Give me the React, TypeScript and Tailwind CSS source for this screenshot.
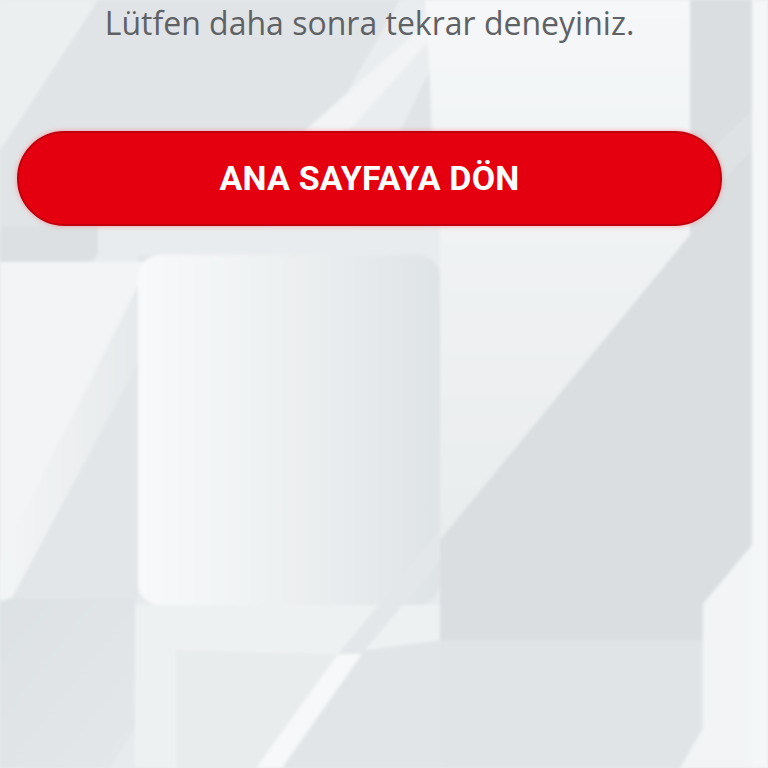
import React from 'react';

// soft geometric backdrop, drawn once behind the content
function Backdrop() {
  return (
    <svg
      className="absolute inset-0 h-full w-full"
      viewBox="0 0 768 768"
      preserveAspectRatio="none"
      xmlns="http://www.w3.org/2000/svg"
    >
      <defs>
        <filter id="soft" x="-5%" y="-5%" width="110%" height="110%">
          <feGaussianBlur stdDeviation="1.6" />
        </filter>
        <linearGradient id="bigCard" x1="0" y1="0" x2="1" y2="0">
          <stop offset="0" stopColor="#f8f9fa" />
          <stop offset="0.45" stopColor="#eef1f2" />
          <stop offset="1" stopColor="#dfe3e5" />
        </linearGradient>
        <linearGradient id="lightTop" x1="0" y1="0" x2="0" y2="1">
          <stop offset="0" stopColor="#f5f7f8" />
          <stop offset="1" stopColor="#e9eced" />
        </linearGradient>
        <linearGradient id="leftCol" x1="0" y1="0" x2="1" y2="0">
          <stop offset="0" stopColor="#f3f5f6" />
          <stop offset="1" stopColor="#e6e9eb" />
        </linearGradient>
        <linearGradient id="darkBox" x1="0" y1="0" x2="1" y2="1">
          <stop offset="0" stopColor="#dde1e3" />
          <stop offset="1" stopColor="#e4e7e9" />
        </linearGradient>
      </defs>
      <g filter="url(#soft)">
        {/* top left area */}
        <rect x="0" y="0" width="430" height="262" fill="#e1e4e6" />
        <polygon points="0,0 98,0 20,120 0,150" fill="#eceff0" />
        <polygon points="250,262 335,262 430,70 430,0 400,0" fill="#eaedef" />
        <polygon points="300,135 345,135 430,40 430,20" fill="#f2f4f5" />

        {/* light column top centre-right */}
        <polygon points="425,0 690,0 690,235 440,540 440,250" fill="url(#lightTop)" />

        {/* dark right mass */}
        <polygon points="690,0 752,0 752,545 703,604 703,768 440,768 440,540 690,235" fill="#dadee0" />
        <polygon points="690,170 752,110 752,150 690,215" fill="#dfe2e4" />
        <rect x="440" y="640" width="263" height="128" fill="#e0e4e6" />

        {/* right strip */}
        <rect x="752" y="0" width="16" height="768" fill="#f4f6f7" />
        <polygon points="752,545 752,768 680,768 703,728 703,604" fill="#f2f4f5" />

        {/* under the button, left */}
        <rect x="0" y="226" width="440" height="40" fill="#e9ecee" />
        <path d="M0 226 H98 V248 Q98 262 84 262 H0 Z" fill="#dce0e2" />

        {/* left column */}
        <rect x="0" y="262" width="138" height="338" fill="url(#leftCol)" />
        <polygon points="196,255 138,255 138,600 0,600 0,620" fill="#e3e6e8" />
        <polygon points="0,262 150,262 0,560" fill="#f2f4f5" />

        {/* big rounded card */}
        <rect x="138" y="255" width="302" height="350" rx="22" fill="url(#bigCard)" />

        {/* bottom middle */}
        <rect x="135" y="605" width="305" height="163" fill="#eef1f2" />
        <polygon points="176,650 338,654 258,768 176,768" fill="#e9eced" />
        <polygon points="338,654 440,640 440,768 258,768" fill="#e1e5e7" />
        <polygon points="338,654 362,654 282,768 256,768" fill="#f6f8f9" />
        <polygon points="440,530 338,654 362,654 440,560" fill="#e4e7e9" />

        {/* bottom left box */}
        <path d="M0 612 Q0 598 14 598 H135 V728 L110 768 H0 Z" fill="url(#darkBox)" />
      </g>
    </svg>
  );
}

export default function App() {
  return (
    <div className="relative h-[768px] w-[768px] overflow-hidden bg-[#e8ebed]">
      <Backdrop />
      <div className="relative flex w-[739px] flex-col items-center px-[17px] pt-[4px]">
        <p
          className="text-center text-[32px] leading-[38px] text-[#5f6265]"
          style={{ fontFamily: '"Open Sans", "Liberation Sans", sans-serif' }}
        >
          Lütfen daha sonra tekrar deneyiniz.
        </p>
        <button
          type="button"
          className="mt-[89px] flex h-[95px] w-full items-center justify-center rounded-full border-2 border-[#c0000e] bg-[#e5000f] text-[34px] font-bold tracking-[0.2px] text-white shadow-[0_0_5px_rgba(255,90,90,0.55)]"
          style={{ fontFamily: 'Roboto, "Liberation Sans", sans-serif' }}
        >
          ANA SAYFAYA DÖN
        </button>
      </div>
    </div>
  );
}
